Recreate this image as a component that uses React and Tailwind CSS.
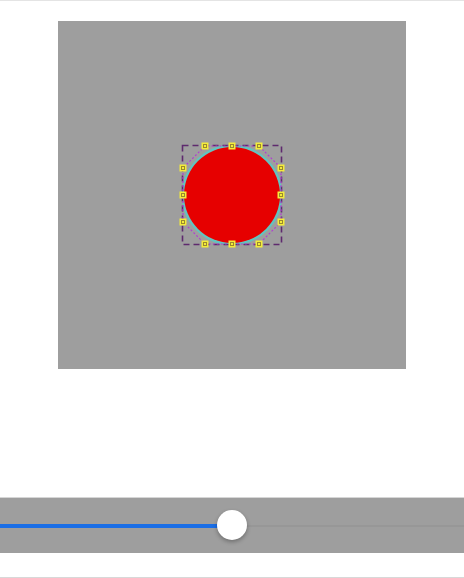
import React from 'react';

const handles = [
  [147, 125], [174, 125], [201, 125],
  [125, 147], [125, 174], [125, 201],
  [223, 147], [223, 174], [223, 201],
  [147, 223], [174, 223], [201, 223],
];

function Shape() {
  return (
    <svg width="348" height="348" viewBox="0 0 348 348">
      <circle cx="174" cy="174" r="49" fill="none" stroke="#62c4c0" strokeWidth="2.5" />
      <circle cx="174" cy="174" r="48" fill="#e60000" />
      <rect x="124.5" y="124.5" width="99" height="99" fill="none" stroke="#5e2a6e" strokeWidth="1.6" strokeDasharray="6 4" />
      <polygon
        points="147,125 125,147 125,201 147,223 201,223 223,201 223,147 201,125"
        fill="none"
        stroke="#b040d0"
        strokeWidth="1.2"
        strokeDasharray="2 2"
      />
      {handles.map(([x, y]) => (
        <g key={`${x}-${y}`}>
          <rect x={x - 3.5} y={y - 3.5} width="7" height="7" fill="#f4ec3a" />
          <rect x={x - 1.5} y={y - 1.5} width="3" height="3" fill="none" stroke="#9a8a30" strokeWidth="1" />
        </g>
      ))}
    </svg>
  );
}

export default function App() {
  return (
    <div className="w-[464px] h-[578px] bg-white flex flex-col overflow-hidden">
      <div className="h-px bg-[#e4e4e4]" />
      <div className="pt-[20px] flex justify-center">
        <div className="w-[348px] h-[348px] bg-[#9e9e9e]">
          <Shape />
        </div>
      </div>
      <div className="h-[128px]" />
      <div className="h-[56px] bg-[#9e9e9e] border-t border-[#d6d6d6] flex items-center">
        <div className="relative w-full h-[4px]">
          <div className="absolute left-0 top-0 h-[4px] w-[220px] bg-[#1a6ee6]" />
          <div className="absolute left-[247px] right-0 top-[1px] h-[2px] bg-[#979797]" />
          <div className="absolute left-[217px] top-[-14px] w-[30px] h-[30px] rounded-full bg-white shadow-[0_2px_4px_rgba(0,0,0,0.3)]" />
        </div>
      </div>
      <div className="flex-1" />
      <div className="h-px bg-[#d8d8d8]" />
    </div>
  );
}
